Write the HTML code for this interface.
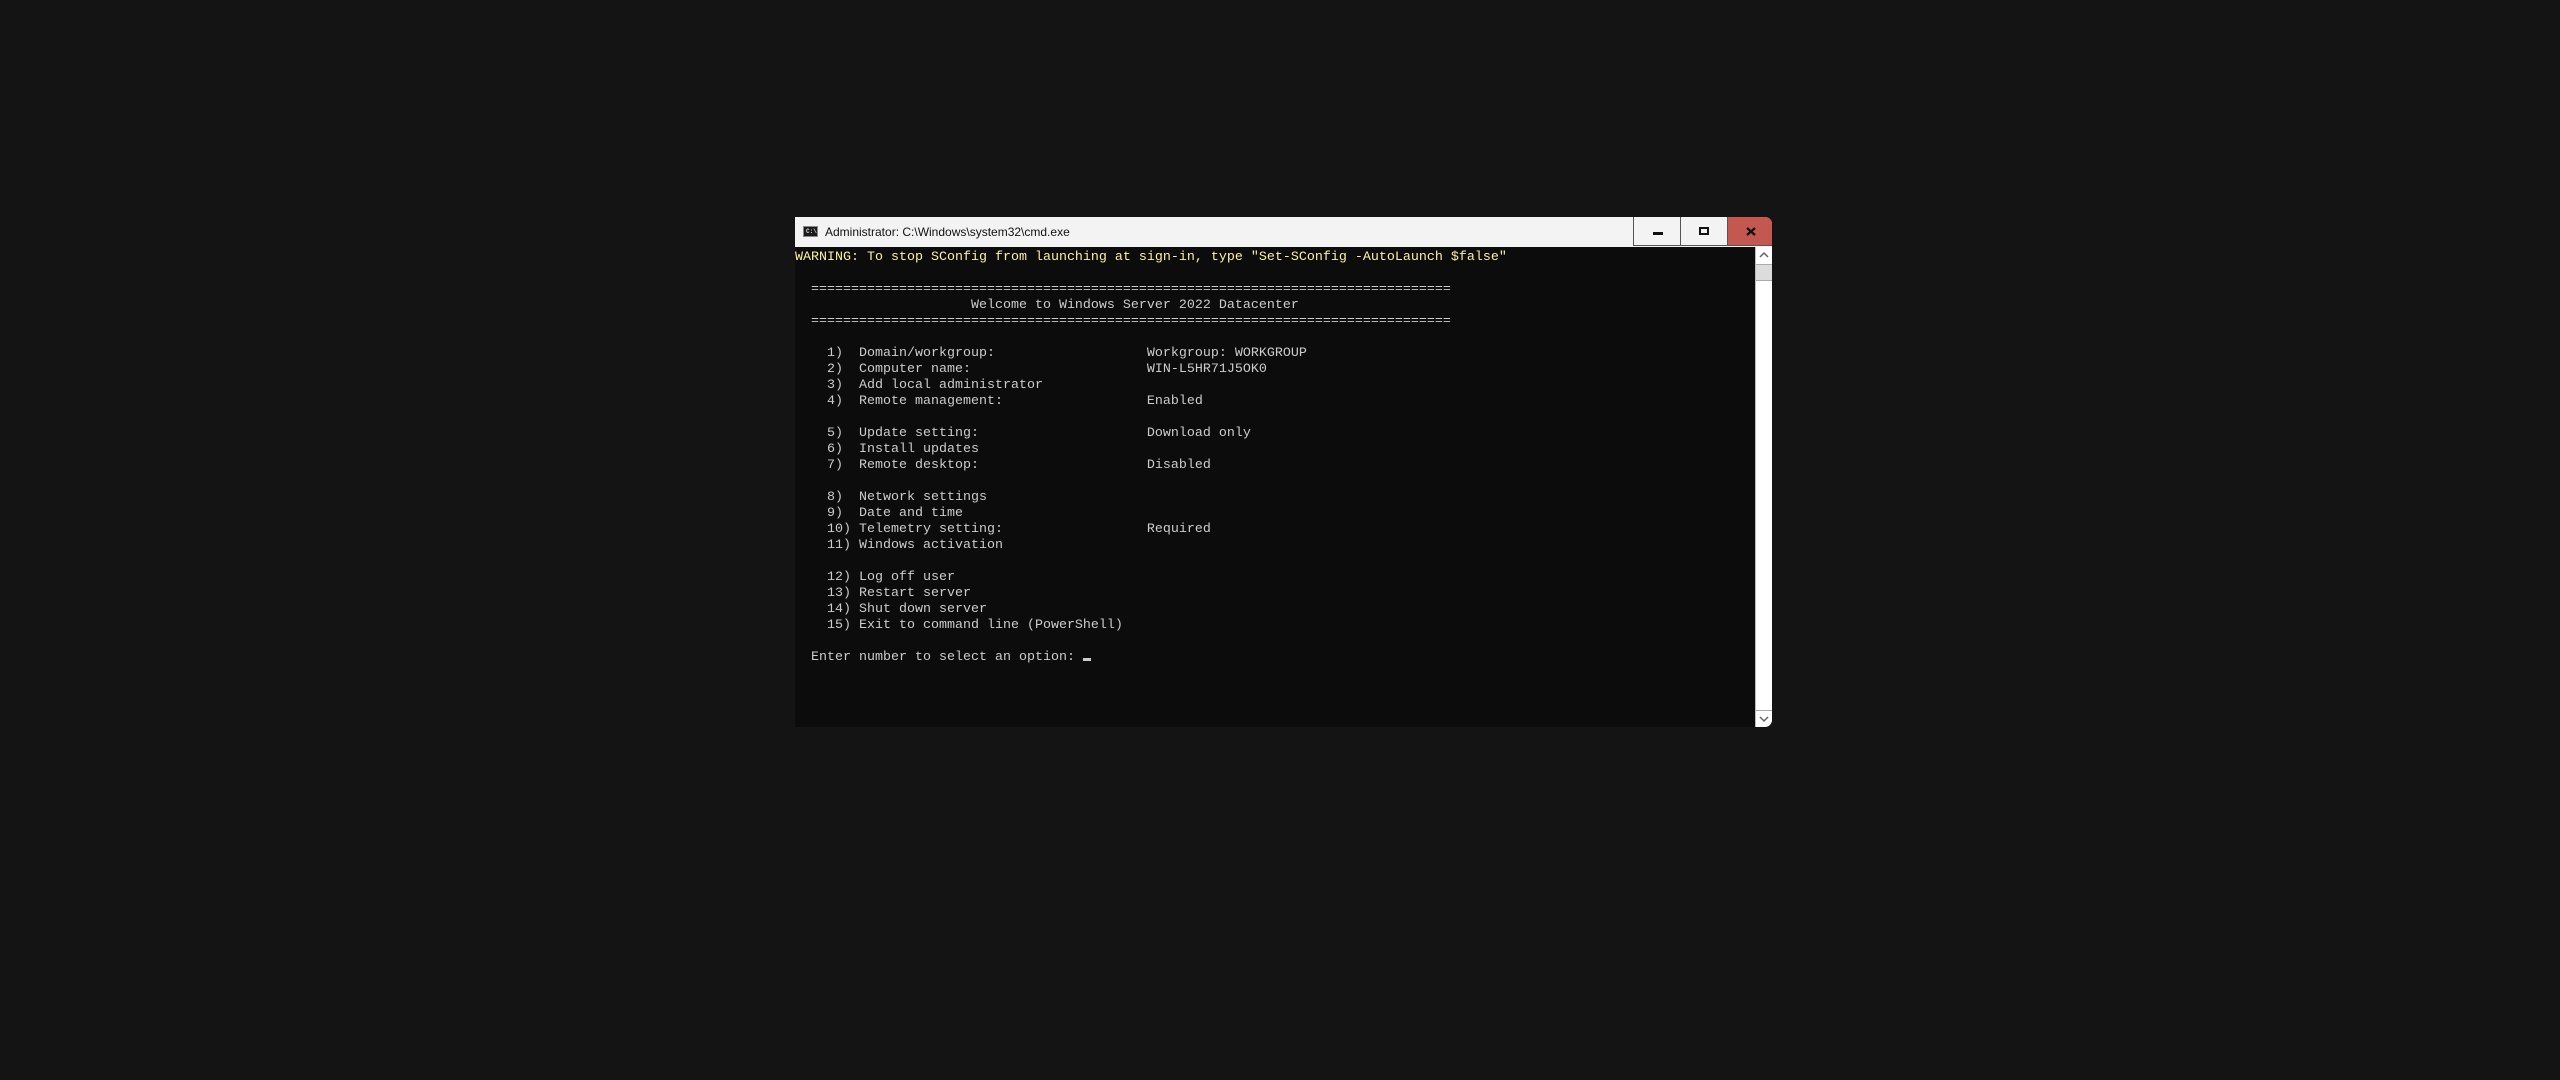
<!DOCTYPE html>
<html><head><meta charset="utf-8"><style>
html,body{margin:0;padding:0;width:2560px;height:1080px;background:#141414;overflow:hidden}
.win{position:absolute;left:795px;top:217px;width:977px;height:510px;background:#0c0c0c;border-top-right-radius:7px;border-bottom-right-radius:7px;overflow:hidden}
.title{position:absolute;left:0;top:0;width:977px;height:30px;background:#f3f3f3}
.ttext{position:absolute;left:30px;top:8px;font:12px "Liberation Sans",sans-serif;color:#111}
.icon{position:absolute;left:8px;top:9px;width:15px;height:11px;background:#1a1a1a;border:1px solid #888;box-sizing:border-box}
.icon span{position:absolute;left:2px;top:1px;font:bold 6px "Liberation Mono",monospace;color:#ddd;line-height:7px}
.btn{position:absolute;top:0;height:29px;border-left:1px solid #555;border-bottom:1px solid #555;box-sizing:border-box;background:#f3f3f3}
.close{background:#c4574f;border-left:1px solid #555}
.term{position:absolute;left:0;top:33px;font:13.33px/16px "Liberation Mono",monospace;color:#cccccc;white-space:pre;margin:0}
.y{color:#f9f1a5}
.sb{position:absolute;left:960px;top:30px;width:17px;height:480px;background:#fff;border-left:1px solid #bbb;box-sizing:border-box}
.cur{position:absolute;left:1083px;top:658px;width:8px;height:3px;background:#ccc}
</style></head><body>
<div class="win">
<div class="title">
<div class="icon"><span>C:\</span></div>
<div class="ttext">Administrator: C:\Windows\system32\cmd.exe</div>
<div class="btn" style="left:838px;width:47px"><div style="position:absolute;left:19px;top:15px;width:10px;height:3px;background:#111"></div></div>
<div class="btn" style="left:885px;width:47px"><div style="position:absolute;left:18px;top:10px;width:10px;height:8px;border:2px solid #111;box-sizing:border-box"></div></div>
<div class="btn close" style="left:932px;width:45px"><svg style="position:absolute;left:18px;top:10px" width="10" height="9"><path d="M1 1L9 8M9 1L1 8" stroke="#111" stroke-width="2.2"/></svg></div>
</div>
<pre class="term"><span class="y">WARNING: To stop SConfig from launching at sign-in, type "Set-SConfig -AutoLaunch $false"</span>

  ================================================================================
                      Welcome to Windows Server 2022 Datacenter
  ================================================================================

    1)  Domain/workgroup:                   Workgroup: WORKGROUP
    2)  Computer name:                      WIN-L5HR71J5OK0
    3)  Add local administrator
    4)  Remote management:                  Enabled

    5)  Update setting:                     Download only
    6)  Install updates
    7)  Remote desktop:                     Disabled

    8)  Network settings
    9)  Date and time
    10) Telemetry setting:                  Required
    11) Windows activation

    12) Log off user
    13) Restart server
    14) Shut down server
    15) Exit to command line (PowerShell)

  Enter number to select an option: </pre>
<div class="sb">
<svg style="position:absolute;left:0;top:0" width="16" height="17"><path d="M4 10L8 6L12 10" stroke="#666" stroke-width="1.5" fill="none"/></svg>
<div style="position:absolute;left:0;top:17px;width:16px;height:17px;background:#dcdcdc;border-top:1px solid #aaa;border-bottom:1px solid #aaa;box-sizing:border-box"></div>
<div style="position:absolute;left:0;top:463px;width:16px;height:1px;background:#aaa"></div>
<svg style="position:absolute;left:0;top:464px" width="16" height="16"><path d="M4 6L8 10L12 6" stroke="#666" stroke-width="1.5" fill="none"/></svg>
</div>
</div>
<div class="cur"></div>
</body></html>
